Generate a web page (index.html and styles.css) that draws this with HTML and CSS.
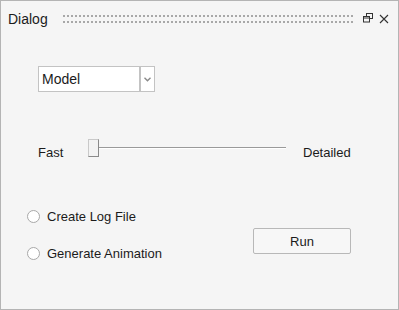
FILE: index.html
```html
<!DOCTYPE html>
<html lang="en">
<head>
    <meta charset="UTF-8">
    <link rel="stylesheet" href="styles.css">
</head>
<body>
    <div class="dialog">
        <div class="title-bar">
            <span class="title">Dialog</span>
            <div class="grip"></div>
            <svg class="title-icon" width="10" height="10" viewBox="0 0 10 10">
                <rect x="3.5" y="0.5" width="6" height="5" fill="none" stroke="#333" stroke-width="1"/>
                <rect x="0.5" y="3.5" width="6" height="5.5" fill="#f5f5f5" stroke="#333" stroke-width="1"/>
                <line x1="0.5" y1="5" x2="6.5" y2="5" stroke="#333" stroke-width="1"/>
            </svg>
            <svg class="title-icon close" width="10" height="10" viewBox="0 0 10 10">
                <path d="M1 1 L9 9 M9 1 L1 9" stroke="#333" stroke-width="1.1" fill="none"/>
            </svg>
        </div>

        <div class="content">
            <div class="combo">
                <div class="combo-value">Model</div>
                <div class="combo-button">
                    <svg width="7" height="5" viewBox="0 0 7 5">
                        <path d="M0.5 0.8 L3.5 3.8 L6.5 0.8" stroke="#8a8a8a" stroke-width="1.4" fill="none"/>
                    </svg>
                </div>
            </div>

            <div class="slider-row">
                <span class="slider-label">Fast</span>
                <div class="slider">
                    <div class="slider-handle"></div>
                    <div class="slider-track"></div>
                </div>
                <span class="slider-label detailed">Detailed</span>
            </div>

            <div class="bottom-row">
                <div class="options">
                    <label class="radio-row"><span class="radio"></span>Create Log File</label>
                    <label class="radio-row"><span class="radio"></span>Generate Animation</label>
                </div>
                <button class="run-btn">Run</button>
            </div>
        </div>
    </div>
</body>
</html>
```

FILE: styles.css
```css
body {
    margin: 0;
    font-family: 'Liberation Sans', Arial, sans-serif;
    color: #1b1b1b;
}

.dialog {
    width: 399px;
    height: 310px;
    box-sizing: border-box;
    border: 1px solid #b4b4b4;
    background-color: #f5f5f5;
}

.title-bar {
    display: flex;
    align-items: center;
    height: 36px;
    padding-left: 7px;
    padding-right: 9px;
}

.title {
    font-size: 14px;
    line-height: 16px;
}

.grip {
    flex: 1;
    height: 8px;
    margin-left: 15px;
    margin-right: 8px;
    background-image:
        linear-gradient(to right, #a8a8a8 50%, transparent 50%),
        linear-gradient(to right, #a8a8a8 50%, transparent 50%);
    background-size: 4px 2px, 4px 2px;
    background-position: 0 0, 0 6px;
    background-repeat: repeat-x;
}

.title-icon {
    display: block;
    margin-top: -2px;
}

.title-icon.close {
    margin-left: 6px;
    margin-top: 0;
}

.content {
    padding: 0 37px;
    font-size: 13px;
}

/* combo box */
.combo {
    display: flex;
    margin-top: 29px;
    height: 26px;
}

.combo-value {
    width: 102px;
    box-sizing: border-box;
    border: 1px solid #c3c3c3;
    background-color: #fff;
    padding-left: 3px;
    font-size: 14px;
    line-height: 24px;
}

.combo-button {
    width: 15px;
    box-sizing: border-box;
    border: 1px solid #c3c3c3;
    background-color: #fff;
    display: flex;
    align-items: center;
    justify-content: center;
}

/* slider */
.slider-row {
    display: flex;
    align-items: flex-start;
    margin-top: 47px;
    height: 18px;
}

.slider-label {
    line-height: 16px;
    padding-top: 6px;
    width: 50px;
}

.slider-label.detailed {
    width: auto;
    margin-left: 17px;
}

.slider {
    display: flex;
    align-items: flex-start;
    width: 198px;
}

.slider-handle {
    width: 11px;
    height: 18px;
    box-sizing: border-box;
    border-top: 1px solid #c9c9c9;
    border-left: 1px solid #c9c9c9;
    border-right: 1px solid #8a8a8a;
    border-bottom: 1px solid #8a8a8a;
    background-color: #f3f3f3;
}

.slider-track {
    flex: 1;
    margin-top: 8px;
    height: 1px;
    background-color: #9a9a9a;
    border-bottom: 1px solid #fff;
}

/* radios and run button */
.bottom-row {
    display: flex;
    align-items: flex-start;
    margin-top: 49px;
    margin-left: -11px;
}

.options {
    display: flex;
    flex-direction: column;
    gap: 17px;
    width: 226px;
}

.radio-row {
    display: flex;
    align-items: center;
    height: 20px;
}

.radio {
    width: 13px;
    height: 13px;
    box-sizing: border-box;
    border: 1px solid #a8a8a8;
    border-radius: 50%;
    background-color: #fff;
    margin-right: 7px;
}

.run-btn {
    margin-top: 22px;
    width: 98px;
    height: 26px;
    border: 1px solid #b8b8b8;
    border-radius: 2px;
    background-color: #f7f7f7;
    font-family: 'Liberation Sans', Arial, sans-serif;
    font-size: 13px;
    color: #1b1b1b;
    padding: 0;
}
```
